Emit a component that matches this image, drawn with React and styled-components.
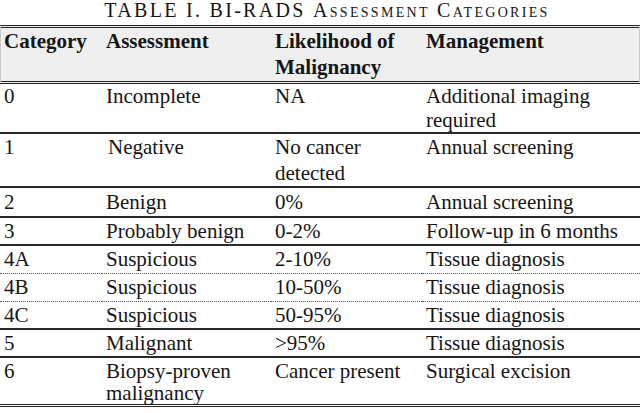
import React from 'react'
import styled, { createGlobalStyle } from 'styled-components'

const GlobalStyle = createGlobalStyle`
    html, body {
        margin: 0;
        padding: 0;
        background: #ffffff;
    }
    body, table, th, td {
        font-family: "Liberation Serif", "Times New Roman", serif;
        color: #151515;
    }
`

const Page = styled.div`
    width: 640px;
    height: 413px;
    overflow: hidden;
`

const Title = styled.div`
    font-family: "Liberation Serif", "Times New Roman", serif;
    font-size: 20px;
    line-height: 21px;
    letter-spacing: 2.3px;
    text-align: center;
    padding-left: 14px;
    margin-bottom: 4px;
    white-space: nowrap;
`

const SmallCaps = styled.span`
    font-variant: small-caps;
`

const Table = styled.table`
    width: 640px;
    table-layout: fixed;
    border-spacing: 0;
    font-family: "Liberation Serif", "Times New Roman", serif;
    font-size: 21px;
`

const Col = styled.col`
    width: ${p => p.$w}px;
`

const Head = styled.thead`
    & th {
        background: #efefef;
        font-weight: bold;
        text-align: left;
        vertical-align: top;
        line-height: 26px;
        padding: 0 2px 1px 4px;
        border-top: 3px double #222;
        border-bottom: 3px double #222;
    }
    & th:first-child {
        border-left: 1px solid #c8c8c8;
        padding-left: 3px;
    }
    & th:last-child {
        border-right: 1px solid #c8c8c8;
    }
`

const lineStyles = {
    solid: '2px solid #2a2a2a',
    dotted: '1px dotted #555',
    double: '3px double #222',
}

const Row = styled.tr`
    & > td {
        vertical-align: top;
        line-height: ${p => p.$lh}px;
        padding: ${p => p.$pt || 0}px 2px ${p => p.$pb || 0}px 4px;
        border-bottom: ${p => lineStyles[p.$line]};
        white-space: nowrap;
    }
`

const Indent = styled.span`
    padding-left: ${p => p.$x}px;
`

const widths = [102, 169, 151, 218]

const rows = [
    { cat: '0', assess: 'Incomplete', like: ['NA'], manage: ['Additional imaging', 'required'], lh: 24, line: 'solid' },
    { cat: '1', assess: 'Negative', indent: 2, like: ['No cancer', 'detected'], manage: ['Annual screening'], lh: 26, line: 'solid' },
    { cat: '2', assess: 'Benign', like: ['0%'], manage: ['Annual screening'], lh: 26, pt: 1, pb: 1, line: 'solid' },
    { cat: '3', assess: 'Probably benign', like: ['0-2%'], manage: ['Follow-up in 6 months'], lh: 26, line: 'solid' },
    { cat: '4A', assess: 'Suspicious', like: ['2-10%'], manage: ['Tissue diagnosis'], lh: 26, pb: 1, line: 'dotted' },
    { cat: '4B', assess: 'Suspicious', like: ['10-50%'], manage: ['Tissue diagnosis'], lh: 26, pb: 1, line: 'dotted' },
    { cat: '4C', assess: 'Suspicious', like: ['50-95%'], manage: ['Tissue diagnosis'], lh: 26, line: 'solid' },
    { cat: '5', assess: 'Malignant', like: ['>95%'], manage: ['Tissue diagnosis'], lh: 26, line: 'solid' },
    { cat: '6', assess: 'Biopsy-proven\nmalignancy', like: ['Cancer present'], manage: ['Surgical excision'], lh: 22, pt: 2, line: 'double' },
]

function Lines({ items }) {
    return items.map((t, i) => (
        <React.Fragment key={i}>
            {i > 0 && <br />}
            {t}
        </React.Fragment>
    ))
}

export default function App() {
    return (
        <Page>
            <GlobalStyle />
            <Title>
                TABLE I. BI-RADS <SmallCaps>Assessment Categories</SmallCaps>
            </Title>
            <Table>
                <colgroup>
                    {widths.map((w, i) => <Col key={i} $w={w} />)}
                </colgroup>
                <Head>
                    <tr>
                        <th>Category</th>
                        <th>Assessment</th>
                        <th>Likelihood of<br />Malignancy</th>
                        <th>Management</th>
                    </tr>
                </Head>
                <tbody>
                    {rows.map(r => (
                        <Row key={r.cat} $lh={r.lh} $pt={r.pt} $pb={r.pb} $line={r.line}>
                            <td>{r.cat}</td>
                            <td>
                                {r.indent ? <Indent $x={r.indent}>{r.assess}</Indent> : <Lines items={r.assess.split('\n')} />}
                            </td>
                            <td><Lines items={r.like} /></td>
                            <td><Lines items={r.manage} /></td>
                        </Row>
                    ))}
                </tbody>
            </Table>
        </Page>
    )
}
